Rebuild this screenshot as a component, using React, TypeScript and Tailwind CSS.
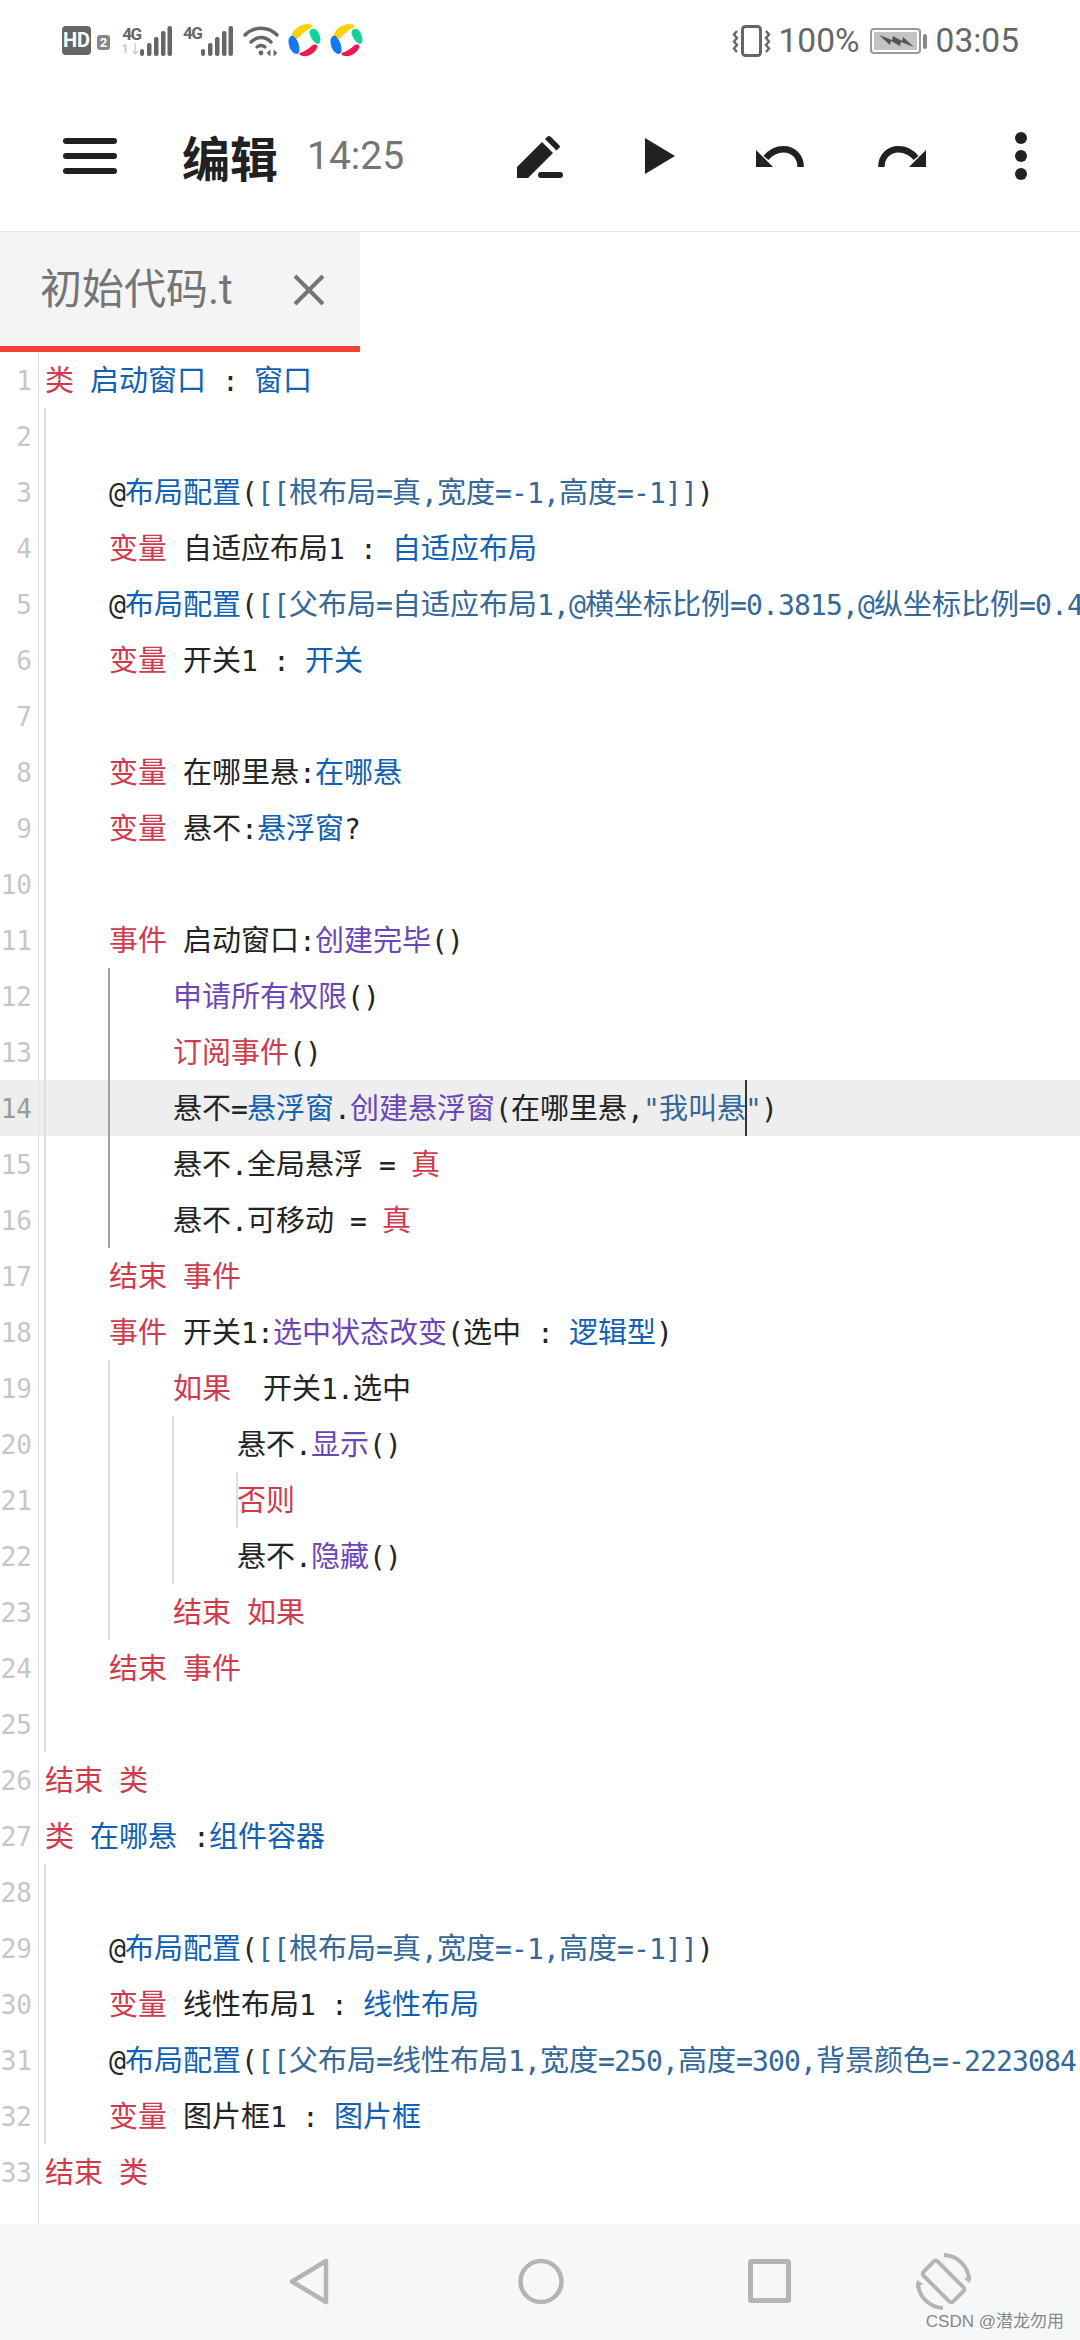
import { Children, cloneElement, isValidElement } from "react";
import type { ReactElement, ReactNode } from "react";

const Kw = ({ children }: { children: ReactNode }) => <span className="text-[#cf3a4c]">{children}</span>;
const Ty = ({ children }: { children: ReactNode }) => <span className="text-[#1260b4]">{children}</span>;
const At = ({ children }: { children: ReactNode }) => <span className="text-[#34679a]">{children}</span>;
const Fn = ({ children }: { children: ReactNode }) => <span className="text-[#6b46b8]">{children}</span>;

// the editor draws han wider than its latin cell, so han runs get their own size
const cjk = (node: ReactNode): ReactNode =>
  Children.map(node, (child) => {
    if (typeof child === "string") {
      return child.split(/([\u4e00-\u9fff]+)/).map((part, i) =>
        i % 2 ? (
          <span key={i} className="text-[29px] tracking-normal">
            {part}
          </span>
        ) : (
          part
        ),
      );
    }
    if (isValidElement(child)) {
      const el = child as ReactElement<{ children?: ReactNode }>;
      return el.props.children ? cloneElement(el, {}, cjk(el.props.children)) : el;
    }
    return child;
  });

const Row = ({ children }: { children?: ReactNode }) => (
  <div className="h-[56px] leading-[59px] whitespace-pre">{cjk(children)}</div>
);

// indent guide, children are one level deeper
const Block = ({ dark, children }: { dark?: boolean; children: ReactNode }) => (
  <div className={`-ml-px pl-[63px] border-l-2 ${dark ? "border-[#a0a0a0]" : "border-[#dcdcdc]"}`}>{children}</div>
);

const Signal = () => (
  <svg width="32" height="30" viewBox="0 0 32 30" fill="#666">
    <rect x="0" y="23" width="4" height="7" rx="2" />
    <rect x="7" y="17" width="4.5" height="13" rx="2" />
    <rect x="14" y="11" width="4.5" height="19" rx="2" />
    <rect x="21" y="5" width="4.5" height="25" rx="2" />
    <rect x="27.5" y="0" width="4.5" height="30" rx="2" />
  </svg>
);

const Swirl = () => (
  <svg width="33" height="33" viewBox="0 0 32 33">
    <path d="M3 12C4 5 12 0 19 0C22 0 24 1 24 3C20 5 15 8 11 13C8 16 4 15 3 12Z" fill="#fbd00e" />
    <path d="M24 5C28 4 31 9 32 15C32 18 31 20 29 20C26 19 22 14 21 9C21 7 22 5 24 5Z" fill="#10d49a" />
    <path d="M29 22C28 28 21 33 15 32C12 32 11 31 11 29C15 28 20 25 23 22C25 20 28 20 29 22Z" fill="#f5154f" />
    <path d="M8 30C3 29 0 23 0 17C0 13 3 11 5 12C8 14 11 20 11 26C11 28 10 30 8 30Z" fill="#1677ee" />
  </svg>
);

const Undo = ({ flip }: { flip?: boolean }) => (
  <svg width="48" height="21" viewBox="0 0 48 21" fill="#212121" className={flip ? "-scale-x-100" : ""}>
    <path d="M44.6 21C44.6 10 37 3.3 27.5 3.3C21 3.3 15 6 10 12" fill="none" stroke="#212121" strokeWidth="6.5" />
    <path d="M0 4L17 21H0Z" />
  </svg>
);

const lineCount = 33;

export default function App() {
  return (
    <div className="w-full h-screen flex flex-col overflow-hidden bg-white font-['Roboto','Noto_Sans_CJK_SC',sans-serif]">
      {/* status bar */}
      <div className="h-[81px] shrink-0 flex items-center pl-[62px] pr-[61px] text-[#666] text-[33.5px]">
        <div className="w-[29px] h-[29px] rounded-[4px] bg-[#666] text-white text-[20px] font-bold leading-[29px] text-center">HD</div>
        <div className="ml-[6px] mt-[3px] w-[13px] h-[15px] rounded-[3px] bg-[#888] text-white text-[13px] font-bold leading-[15px] text-center">2</div>
        <div className="ml-[13px] w-[17px] flex flex-col items-center">
          <span className="text-[17px] font-bold leading-[16px] tracking-[-1.5px]">4G</span>
          <span className="text-[13px] font-bold leading-[14px] text-[#ccc]">1↓</span>
        </div>
        <Signal />
        <div className="ml-[11px] w-[18px] -mt-[15px] text-[17px] font-bold leading-[15px] tracking-[-1.5px]">4G</div>
        <Signal />
        <svg className="ml-[10px]" width="36" height="30" viewBox="0 0 36 30" fill="none" stroke="#666" strokeWidth="3.4" strokeLinecap="round">
          <path d="M2 9C11 0 25 0 34 9" />
          <path d="M8 16C14 10 22 10 28 16" />
          <path d="M14 21C16.500 19 19.500 19 22 21" />
          <circle cx="18" cy="27" r="2.400" fill="#666" stroke="none" />
          <path d="M27 24L24 27L27 30Z" fill="#666" strokeWidth="0.5" />
          <path d="M31 24L34 27L31 30Z" fill="#666" strokeWidth="0.5" />
        </svg>
        <div className="ml-[9px]"><Swirl /></div>
        <div className="ml-[9px]"><Swirl /></div>
        <div className="flex-1" />
        <svg width="39" height="32" viewBox="0 0 39 32" fill="none" stroke="#666">
          <rect x="10.500" y="1.500" width="18" height="29" rx="3" strokeWidth="3" />
          <path d="M5 6L2 9.500L5 13L2 16.500L5 20L2 23.500L5 27" strokeWidth="2.400" />
          <path d="M34 6L37 9.500L34 13L37 16.500L34 20L37 23.500L34 27" strokeWidth="2.400" />
        </svg>
        <span className="ml-[8px] leading-none">100%</span>
        <svg className="ml-[10px]" width="57" height="26" viewBox="0 0 57 26">
          <rect x="1" y="1" width="49" height="24" rx="3" fill="#fff" stroke="#999" strokeWidth="2" />
          <rect x="4" y="4" width="43" height="18" fill="#c4c4c4" />
          <path d="M9 7L22 12L23 8L32 13L33 9L44 19L31 14L30 18L21 13L20 17Z" fill="#555" />
          <rect x="53" y="6" width="4" height="15" rx="2" fill="#888" />
        </svg>
        <span className="ml-[9px] leading-none">03:05</span>
      </div>

      {/* toolbar */}
      <div className="h-[151px] shrink-0 flex items-center border-b border-[#e8e8e8] pl-[63px]">
        <div className="w-[54px] flex flex-col gap-[9px]">
          <div className="h-[6px] rounded-full bg-[#212121]" />
          <div className="h-[6px] rounded-full bg-[#212121]" />
          <div className="h-[6px] rounded-full bg-[#212121]" />
        </div>
        <span className="ml-[65px] text-[48px] font-bold leading-none text-[#212121] font-['Noto_Sans_CJK_SC',sans-serif]">编辑</span>
        <span className="ml-[29px] text-[39px] leading-none text-[#757575]">14:25</span>
        <svg className="ml-[113px]" width="46" height="43" viewBox="0 0 46 43" fill="#212121">
          <path d="M0 43V32L25 7L36 18L11 43Z" />
          <path d="M28 4L30 2Q32 0 34 2L42 10Q44 12 42 13L39.500 15.500Z" />
          <rect x="21" y="37" width="25" height="6" rx="3" />
        </svg>
        <svg className="ml-[82px]" width="30" height="36" viewBox="0 0 30 36" fill="#212121">
          <path d="M0 0L30 18L0 36Z" />
        </svg>
        <div className="ml-[81px]"><Undo /></div>
        <div className="ml-[74px]"><Undo flip /></div>
        <div className="ml-[89px] flex flex-col gap-[6px]">
          <div className="w-[12px] h-[12px] rounded-full bg-[#212121]" />
          <div className="w-[12px] h-[12px] rounded-full bg-[#212121]" />
          <div className="w-[12px] h-[12px] rounded-full bg-[#212121]" />
        </div>
      </div>

      {/* tabs */}
      <div className="h-[120px] shrink-0 flex">
        <div className="w-[360px] bg-[#f4f4f4] border-b-[6px] border-[#f44336] flex items-center pl-[40px] pt-[2px] text-[#757575]">
          <span className="text-[42px] leading-none">初始代码.t</span>
          <svg className="ml-[60px]" width="32" height="32" viewBox="0 0 32 32" stroke="#757575" strokeWidth="4">
            <path d="M2 2L30 30M30 2L2 30" />
          </svg>
        </div>
      </div>

      {/* editor */}
      <div className="relative flex-1 flex overflow-hidden text-[28px] tracking-[-0.86px] text-[#242424] font-['DejaVu_Sans_Mono','Noto_Sans_CJK_SC',monospace]">
        {/* current line */}
        <div className="absolute inset-x-0 top-[728px] h-[56px] bg-[#eeeeee]" />

        <div className="relative w-[39px] shrink-0 border-r border-[#e0e0e0] pr-[6px] text-right text-[26px] tracking-normal">
          {Array.from({ length: lineCount }, (_, i) => (
            <div key={i} className={`h-[56px] leading-[59px] ${i === 13 ? "text-[#9a9a9a]" : "text-[#c6c6c6]"}`}>
              {i + 1}
            </div>
          ))}
        </div>

        <div className="relative flex-1 pl-[6px]">
          <Row><Kw>类</Kw> <Ty>启动窗口</Ty> : <Ty>窗口</Ty></Row>
          <Block>
            <Row />
            <Row>@<Ty>布局配置</Ty>(<At>[[根布局=真,宽度=-1,高度=-1]]</At>)</Row>
            <Row><Kw>变量</Kw> 自适应布局1 : <Ty>自适应布局</Ty></Row>
            <Row>@<Ty>布局配置</Ty>(<At>[[父布局=自适应布局1,@横坐标比例=0.3815,@纵坐标比例=0.4</At></Row>
            <Row><Kw>变量</Kw> 开关1 : <Ty>开关</Ty></Row>
            <Row />
            <Row><Kw>变量</Kw> 在哪里悬:<Ty>在哪悬</Ty></Row>
            <Row><Kw>变量</Kw> 悬不:<Ty>悬浮窗</Ty>?</Row>
            <Row />
            <Row><Kw>事件</Kw> 启动窗口:<Fn>创建完毕</Fn>()</Row>
            <Block dark>
              <Row><Fn>申请所有权限</Fn>()</Row>
              <Row><Kw>订阅事件</Kw>()</Row>
              <Row>
                悬不=<Ty>悬浮窗</Ty>.<Fn>创建悬浮窗</Fn>(在哪里悬,<At>"我叫悬</At>
                <span className="inline-block w-[2px] h-[56px] -mr-[2px] -ml-px align-top bg-[#333]" />
                <At>"</At>)
              </Row>
              <Row>悬不.全局悬浮 = <Kw>真</Kw></Row>
              <Row>悬不.可移动 = <Kw>真</Kw></Row>
            </Block>
            <Row><Kw>结束 事件</Kw></Row>
            <Row><Kw>事件</Kw> 开关1:<Fn>选中状态改变</Fn>(选中 : <Ty>逻辑型</Ty>)</Row>
            <Block>
              <Row><Kw>如果</Kw>  开关1.选中</Row>
              <Block>
                <Row>悬不.<Fn>显示</Fn>()</Row>
                <div className="-ml-px border-l-2 border-[#dcdcdc]">
                  <div className="-ml-px">
                    <Row><Kw>否则</Kw></Row>
                  </div>
                </div>
                <Row>悬不.<Fn>隐藏</Fn>()</Row>
              </Block>
              <Row><Kw>结束 如果</Kw></Row>
            </Block>
            <Row><Kw>结束 事件</Kw></Row>
            <Row />
          </Block>
          <Row><Kw>结束 类</Kw></Row>
          <Row><Kw>类</Kw> <Ty>在哪悬</Ty> :<Ty>组件容器</Ty></Row>
          <Block>
            <Row />
            <Row>@<Ty>布局配置</Ty>(<At>[[根布局=真,宽度=-1,高度=-1]]</At>)</Row>
            <Row><Kw>变量</Kw> 线性布局1 : <Ty>线性布局</Ty></Row>
            <Row>@<Ty>布局配置</Ty>(<At>[[父布局=线性布局1,宽度=250,高度=300,背景颜色=-2223084</At></Row>
            <Row><Kw>变量</Kw> 图片框1 : <Ty>图片框</Ty></Row>
          </Block>
          <Row><Kw>结束 类</Kw></Row>
        </div>
      </div>

      {/* nav bar */}
      <div className="relative h-[116px] shrink-0 bg-[#f6f7f9] flex items-center pl-[289px] pb-[2px]">
        <svg width="40" height="47" viewBox="0 0 40 47" fill="none" stroke="#b4b4b4" strokeWidth="4.500" strokeLinejoin="round">
          <path d="M37 3V44L3 23.500Z" />
        </svg>
        <svg className="ml-[189px]" width="46" height="47" viewBox="0 0 46 47" fill="none" stroke="#b4b4b4" strokeWidth="4.500">
          <circle cx="23" cy="23.500" r="20.500" />
        </svg>
        <svg className="ml-[184px]" width="43" height="44" viewBox="0 0 43 44" fill="none" stroke="#b4b4b4" strokeWidth="5">
          <rect x="2.500" y="2.500" width="38" height="39" rx="1" />
        </svg>
        <svg className="ml-[124px]" width="57" height="57" viewBox="0 0 57 57" fill="none" stroke="#b4b4b4" strokeWidth="4">
          <rect x="18.500" y="7.500" width="20" height="42" rx="3" transform="rotate(-45 28.500 28.500)" />
          <path d="M29 2A26 26 0 0 1 54 27" />
          <path d="M3 30A26 26 0 0 0 28 55" />
          <path d="M49 26L55 30L56 22Z" fill="#b4b4b4" stroke="none" />
          <path d="M8 31L2 27L1 35Z" fill="#b4b4b4" stroke="none" />
        </svg>
        <span className="absolute right-[16px] bottom-[7px] text-[17px] leading-[22px] text-[#888] font-['Liberation_Sans','Noto_Sans_CJK_SC',sans-serif]">CSDN @潜龙勿用</span>
      </div>
    </div>
  );
}
